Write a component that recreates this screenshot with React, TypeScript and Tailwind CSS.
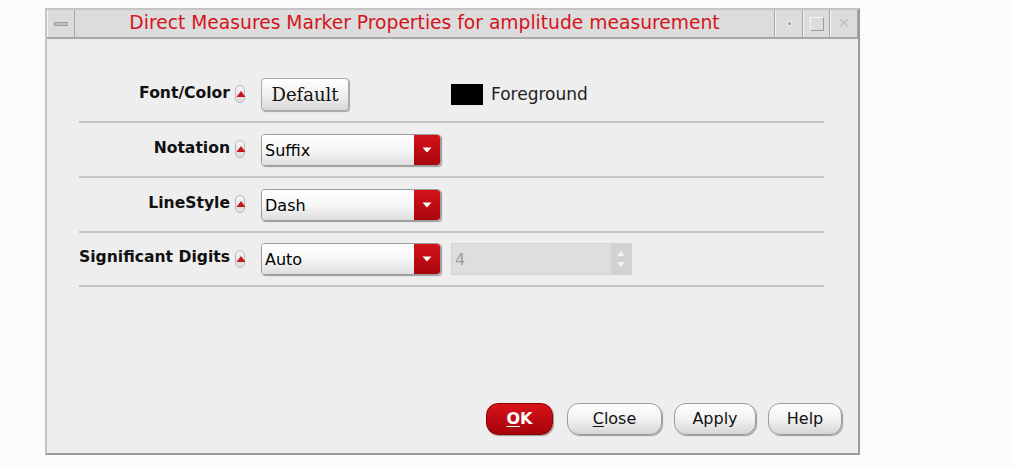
import React from 'react';

const sans = { fontFamily: '"DejaVu Sans", "Liberation Sans", sans-serif' };

function Spin() {
  // small red "up" marker inside a grey pill
  return (
    <span className="relative inline-block shrink-0 w-[10px] h-[18px] rounded-full border border-[#b8b8b8] bg-gradient-to-b from-[#f4f4f4] to-[#dcdcdc] ml-[5px]">
      <svg className="absolute left-0 top-[5px]" width="10" height="7" viewBox="0 0 10 7">
        <path d="M5 0 L9.5 6 L0.5 6 Z" fill="#c8141c" />
      </svg>
    </span>
  );
}

function Combo({ value }: { value: string }) {
  return (
    <div className="flex h-[32px] w-[180px] rounded-[4px] border border-[#9c9c9c] shadow-[1px_1px_1px_rgba(0,0,0,0.35)] overflow-hidden">
      <div className="flex-1 flex items-center pl-[3px] pt-[2px] bg-gradient-to-b from-white via-[#f7f7f7] to-[#dedede] text-[16px] text-black">
        {value}
      </div>
      <div className="w-[26px] flex items-center justify-center bg-gradient-to-b from-[#d4121a] to-[#a8060c]">
        <svg width="10" height="6" viewBox="0 0 10 6">
          <path d="M0.5 0.5 L9.5 0.5 L5 5.5 Z" fill="#ffffff" />
        </svg>
      </div>
    </div>
  );
}

function Row({ label, children, h = 'h-[55px]' }: { label: string; children: React.ReactNode; h?: string }) {
  return (
    <div className={'flex items-center border-b-2 border-[#c6c6c6] ml-[32px] mr-[34px] ' + h}>
      <div className="w-[166px] shrink-0 flex items-center justify-end font-bold text-[15.6px] text-[#111] whitespace-nowrap">
        <span className="-mt-[2px] shrink-0">{label}</span>
        <Spin />
      </div>
      <div className="ml-[16px] flex items-center">{children}</div>
    </div>
  );
}

function Btn({ children, w, red }: { children: React.ReactNode; w: string; red?: boolean }) {
  return (
    <div
      className={
        'h-[32px] rounded-[12px] flex items-center justify-center text-[16px] shadow-[1px_1px_1px_rgba(0,0,0,0.35)] ' +
        w +
        (red
          ? ' bg-gradient-to-b from-[#d8121a] to-[#a6040a] border border-[#8a0004] text-white font-bold'
          : ' bg-gradient-to-b from-white via-[#f2f2f2] to-[#d6d6d6] border border-[#9c9c9c] text-[#111]')
      }
    >
      {children}
    </div>
  );
}

function TitleBtn({ children, w }: { children: React.ReactNode; w: string }) {
  return (
    <div className={'h-full flex items-center justify-center border-l border-[#f4f4f4] border-r border-r-[#a6a6a6] ' + w}>
      {children}
    </div>
  );
}

export default function App() {
  return (
    <div className="w-[1013px] h-[467px] bg-[#fbfbfb] pt-[8px] pl-[45px]" style={sans}>
      <div className="w-[815px] h-[447px] bg-[#eeeeee] border-2 border-[#9a9a9a] border-t-[#c4c4c4] border-l-[#c4c4c4] flex flex-col">
        {/* title bar */}
        <div className="h-[29px] flex bg-[#dcdcdc] border-b-2 border-[#a8a8a8]">
          <TitleBtn w="w-[28px]">
            <div className="w-[14px] h-[4px] bg-[#c2c2c2] border border-[#a0a0a0]" />
          </TitleBtn>
          <div className="flex-1 flex items-center justify-center text-[#d4141c] text-[18.7px] border-r border-[#a6a6a6] pb-[1px]">
            Direct Measures Marker Properties for amplitude measurement
          </div>
          <TitleBtn w="w-[28px]">
            <div className="w-[5px] h-[5px] bg-[#a8a8a8] border border-[#eee]" />
          </TitleBtn>
          <TitleBtn w="w-[27px]">
            <div className="w-[14px] h-[14px] border border-[#f6f6f6] border-r-[#9a9a9a] border-b-[#9a9a9a]" />
          </TitleBtn>
          <TitleBtn w="w-[28px]">
            <span className="text-[#bdbdbd] text-[14px] font-bold">✕</span>
          </TitleBtn>
        </div>

        {/* form */}
        <div className="pt-[29px]">
          <Row label="Font/Color">
            <div
              className="h-[33px] w-[88px] rounded-[4px] border border-[#a8a8a8] bg-gradient-to-b from-white via-[#f0f0f0] to-[#d8d8d8] shadow-[1px_1px_1px_rgba(0,0,0,0.3)] flex items-center justify-center text-[18px] text-[#111]"
              style={{ fontFamily: '"DejaVu Serif", "Liberation Serif", serif' }}
            >
              Default
            </div>
            <div className="ml-[102px] w-[32px] h-[21px] bg-black" />
            <span className="ml-[8px] text-[17px] text-[#222]">Foreground</span>
          </Row>
          <Row label="Notation">
            <Combo value="Suffix" />
          </Row>
          <Row label="LineStyle">
            <Combo value="Dash" />
          </Row>
          <Row label="Significant Digits" h="h-[54px]">
            <Combo value="Auto" />
            <div className="ml-[10px] w-[181px] h-[32px] flex border border-[#d2d2d2] bg-[#dedede]">
              <div className="flex-1 flex items-center pl-[3px] pt-[2px] text-[16px] text-[#9e9e9e]">4</div>
              <div className="w-[20px] flex flex-col items-center justify-center gap-[6px] bg-[#d2d2d2]">
                <svg width="8" height="5" viewBox="0 0 8 5"><path d="M4 0 L8 5 L0 5 Z" fill="#f2f2f2" /></svg>
                <svg width="8" height="5" viewBox="0 0 8 5"><path d="M0 0 L8 0 L4 5 Z" fill="#f2f2f2" /></svg>
              </div>
            </div>
          </Row>
        </div>

        {/* buttons */}
        <div className="mt-auto mb-[18px] flex justify-end pr-[16px] gap-[12px]">
          <Btn w="w-[67px]" red>
            <span><span className="underline underline-offset-2">O</span>K</span>
          </Btn>
          <Btn w="w-[95px] ml-[2px]">
            <span><span className="underline underline-offset-2">C</span>lose</span>
          </Btn>
          <Btn w="w-[82px]">Apply</Btn>
          <Btn w="w-[74px]">Help</Btn>
        </div>
      </div>
    </div>
  );
}
